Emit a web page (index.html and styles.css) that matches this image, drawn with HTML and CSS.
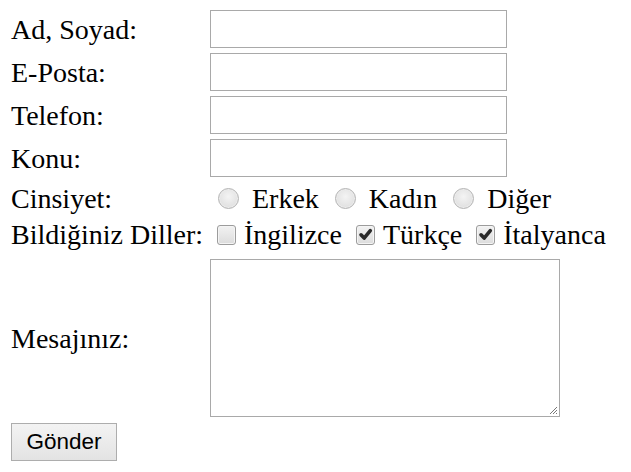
FILE: index.html
```html
<!DOCTYPE html>
<html lang="tr">
<head>
<meta charset="utf-8">
<title>Form</title>
<link rel="stylesheet" href="styles.css">
</head>
<body>
<form class="form">
  <div class="grid">
    <label class="lbl">Ad, Soyad:</label>
    <div class="field"><span class="input"></span></div>

    <label class="lbl">E-Posta:</label>
    <div class="field"><span class="input"></span></div>

    <label class="lbl">Telefon:</label>
    <div class="field"><span class="input"></span></div>

    <label class="lbl">Konu:</label>
    <div class="field"><span class="input"></span></div>

    <label class="lbl">Cinsiyet:</label>
    <div class="field choices radios">
      <span class="radio"></span><span class="opt">Erkek</span>
      <span class="radio"></span><span class="opt">Kadın</span>
      <span class="radio"></span><span class="opt">Diğer</span>
    </div>

    <label class="lbl">Bildiğiniz Diller:</label>
    <div class="field choices checks">
      <span class="check"></span><span class="opt">İngilizce</span>
      <span class="check on"><svg viewBox="0 0 10 10" class="tick"><path d="M2 5.2 L4.1 7.4 L8.2 2.4" /></svg></span><span class="opt">Türkçe</span>
      <span class="check on"><svg viewBox="0 0 10 10" class="tick"><path d="M2 5.2 L4.1 7.4 L8.2 2.4" /></svg></span><span class="opt">İtalyanca</span>
    </div>

    <label class="lbl lbl-msg">Mesajınız:</label>
    <div class="field field-msg"><span class="textarea"><svg class="grip" viewBox="0 0 12 12"><path d="M11 4 L4 11 M11 7 L7 11 M11 10 L10 11"/></svg></span></div>
  </div>
  <button type="button" class="btn">Gönder</button>
</form>
</body>
</html>
```
FILE: styles.css
```css
html, body {
  margin: 0;
  padding: 0;
  background: #fff;
}
body {
  font-family: "Liberation Serif", "Times New Roman", serif;
  font-size: 28px;
  color: #000;
}
.form {
  padding: 10px 0 0 11px;
}
.grid {
  display: grid;
  grid-template-columns: 199px auto;
  grid-template-rows: 38px 38px 38px 38px 32px 31px 162px;
  row-gap: 5px;
  align-items: center;
}
.lbl {
  line-height: 32px;
  white-space: nowrap;
  padding-top: 1px;
}
.lbl-msg {
  margin-top: 5px;
}
.field {
  display: flex;
  align-items: center;
  height: 100%;
}
.input {
  display: block;
  box-sizing: border-box;
  width: 297px;
  height: 38px;
  border: 1px solid #a9a9a9;
  background: #fff;
}
.choices {
  line-height: 32px;
}
.opt {
  white-space: nowrap;
  padding-top: 1px;
}
.radio {
  box-sizing: border-box;
  width: 21px;
  height: 21px;
  border-radius: 50%;
  border: 1px solid #b4b4b4;
  background: radial-gradient(circle at 50% 40%, #f4f4f4 0%, #e4e4e4 60%, #d6d6d6 100%);
  box-shadow: inset 0 0 0 1px #ececec;
  flex: none;
}
.radios .radio {
  margin: 0 13px 0 16px;
}
.radios .radio:first-child {
  margin-left: 8px;
}
.check {
  box-sizing: border-box;
  width: 19px;
  height: 20px;
  border-radius: 3px;
  border: 1px solid #9c9c9c;
  background: linear-gradient(#f2f2f2, #dcdcdc);
  box-shadow: inset 0 0 0 1px #f4f4f4;
  flex: none;
  display: flex;
  align-items: center;
  justify-content: center;
}
.checks .check {
  margin: 0 8px 0 14px;
}
.checks .check:first-child {
  margin-left: 7px;
}
.tick {
  width: 15px;
  height: 15px;
}
.tick path {
  fill: none;
  stroke: #2a2a2a;
  stroke-width: 2.4;
  stroke-linecap: round;
  stroke-linejoin: round;
}
.field-msg {
  align-items: flex-end;
}
.textarea {
  position: relative;
  display: block;
  box-sizing: border-box;
  width: 350px;
  height: 158px;
  border: 1px solid #a9a9a9;
  background: #fff;
}
.grip {
  position: absolute;
  right: 1px;
  bottom: 1px;
  width: 12px;
  height: 12px;
}
.grip path {
  stroke: #777;
  stroke-width: 1;
  fill: none;
}
.btn {
  display: block;
  margin-top: 6px;
  box-sizing: border-box;
  width: 106px;
  height: 38px;
  padding: 0;
  border: 1px solid #adadad;
  border-radius: 0;
  background: linear-gradient(#f3f3f3, #e3e3e3);
  font-family: "Liberation Sans", Arial, sans-serif;
  font-size: 22.5px;
  color: #000;
  line-height: 36px;
}
```
